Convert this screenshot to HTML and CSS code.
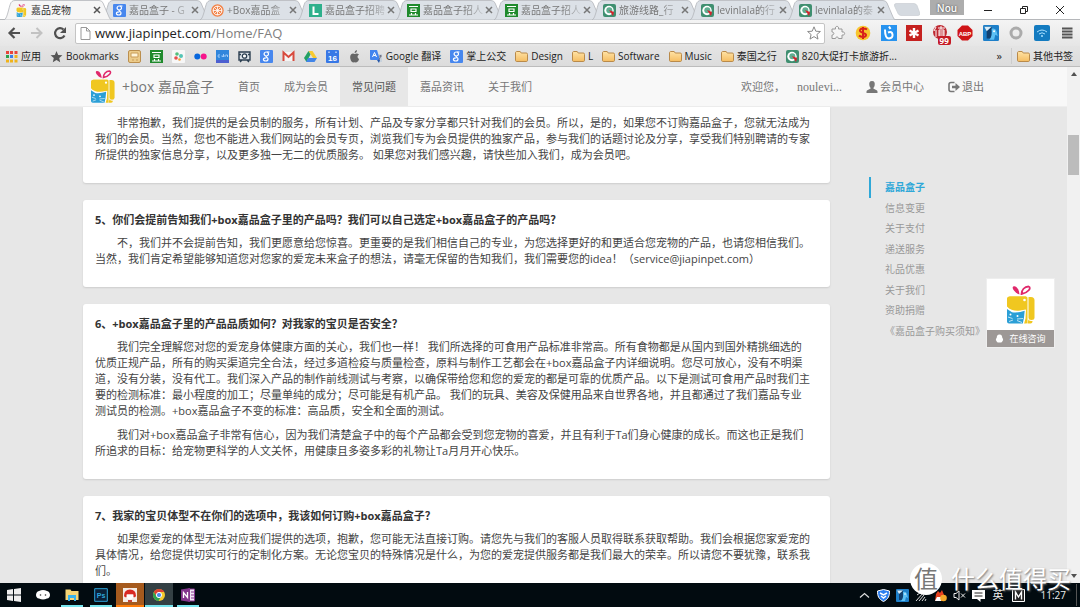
FILE: index.html
```html
<!DOCTYPE html>
<html lang="zh-CN">
<head>
<meta charset="utf-8">
<title>嘉品宠物</title>
<link rel="stylesheet" href="styles.css">
</head>
<body>
<svg class="defs" aria-hidden="true">
  <defs>
    <linearGradient id="folderFill" x1="0" y1="0" x2="0" y2="1"><stop offset="0" stop-color="#ffe3a6"/><stop offset="1" stop-color="#f5bd62"/></linearGradient>
    <symbol id="logo" viewBox="0 0 28 38">
      <path d="M12.500 9C8 7.500 4.500 3 6 1.300 8.500-.5 12 3 12.500 9z" fill="#e0296b"/>
      <path d="M14.500 8.500c0-4 3-7.500 7-7.500 3.500 1-.5 6.500-7 7.500z" fill="none" stroke="#e0296b" stroke-width="1.800"/>
      <path d="M3 11h16q1.500 0 1.500 1.500V37q0 1-1.500 1H2q-2 0-2-2v-7q8 2 18-5c-6 2-14 2-18-3V14q0-3 3-3z" fill="#f0c720"/>
      <path d="M0 21v-7q0-3 3-3h16v12q-2 1-5 .8Q5 24.500 0 20z" fill="#f0c720"/>
      <path d="M-.5 22l5.500 3.500q6 1 14-1.500l-.5 9L17 38.500H-.5z" fill="#fff"/>
      <path d="M0 23.500l5 3.200q6 .8 12.700-1.500L17 32l-1.200 6H2q-2 0-2-2z" fill="#2b9fd6"/>
      <path d="M21.500 11.500H24q3.500 0 3.500 3.500v17q0 2.500-3 2.500t-3-2.500z" fill="#f0c720"/>
      <path d="M21.500 34q1 2 4 1.500V36q0 2-2 2h-3z" fill="#f0c720"/>
      <circle cx="17.500" cy="14.500" r="1.300" fill="#fff"/><circle cx="3.500" cy="29" r="1" fill="#fff"/><circle cx="10.500" cy="30.500" r="1" fill="#fff"/>
      <path d="M1 31.500l4.500 1.500M2 36l4-1.500M10 33.500l6-.5M10 35l5 2" stroke="#fff" stroke-width=".7"/>
    </symbol>
    <symbol id="folder" viewBox="0 0 13 13"><path d="M.5 3c0-1 .4-1.500 1.200-1.500h3.500l1 1.500h5c.8 0 1.300.4 1.300 1.300v6c0 .8-.4 1.200-1.200 1.200H1.700C.9 11.500.5 11 .5 10.300z" fill="url(#folderFill)" stroke="#b98a4a"/></symbol>
    <symbol id="goog" viewBox="0 0 13 13"><rect width="13" height="13" rx="1" fill="#4787ee"/><ellipse cx="6.300" cy="4" rx="2.200" ry="2" fill="none" stroke="#fff" stroke-width="1.200"/><path d="M7 2h2.500M6 6c0 1.300 2 1.500 2 3s-1 2-2.200 2-2.400-.6-2.400-1.700S5 7.700 6.500 7.800" fill="none" stroke="#fff" stroke-width="1.200"/></symbol>
    <symbol id="dou" viewBox="0 0 13 13"><rect width="13" height="13" fill="#1f8a2c"/><path d="M2 2.500h9M4 5h5v2.500H4zM4.500 9v1.500M8.500 9v1.500M2 11h9" fill="none" stroke="#fff" stroke-width="1.200"/></symbol>
    <symbol id="qy" viewBox="0 0 13 13"><rect width="13" height="13" rx="2" fill="#3f8f70"/><circle cx="6" cy="6.500" r="4.700" fill="#fff"/><circle cx="6.300" cy="6.300" r="3" fill="#5fae90"/><path d="M6 6l5 2-1 4z" fill="#d6222c"/></symbol>
    <symbol id="tabshape" viewBox="0 0 108 20" preserveAspectRatio="none"><path d="M0 20C4 19 5 3 8 1.500Q9 .5 11 .5H95Q98 .5 99 3L105 17Q106 20 108 20z" fill="currentColor" stroke="#b2b5ba" stroke-width=".8"/></symbol>
    <symbol id="bird" viewBox="0 0 13 13"><rect width="13" height="13" rx="1" fill="#1d7fc9"/><path d="M1 1.500h6V11H3V5z" fill="#12406f"/><path d="M1 1.500h6L3 5z" fill="#d8eefb"/><path d="M7 3q3-1 4 2l1 4-2-1-1 4H5q3-3 2-9z" fill="#5cc0f5"/><circle cx="9" cy="5" r=".8" fill="#fff"/></symbol>
  </defs>
</svg>

<header class="browser">
  <div class="tabstrip">
    <nav class="tabs" aria-label="标签页">
      <div class="tab active"><svg class="shape"><use href="#tabshape"/></svg><svg class="fav"><use href="#logo"/></svg><span>嘉品宠物</span><button aria-label="关闭"><svg viewBox="0 0 8 8"><path d="M1 1l6 6M7 1L1 7" stroke="#555" stroke-width="1.500"/></svg></button></div>
      <div class="tab"><svg class="shape"><use href="#tabshape"/></svg><svg class="fav"><use href="#goog"/></svg><span>嘉品盒子 - G</span><button aria-label="关闭"><svg viewBox="0 0 8 8"><path d="M1 1l6 6M7 1L1 7" stroke="#777" stroke-width="1.500"/></svg></button></div>
      <div class="tab"><svg class="shape"><use href="#tabshape"/></svg><svg class="fav" viewBox="0 0 13 13"><circle cx="6.500" cy="6.500" r="6.200" fill="#f28247"/><circle cx="6.500" cy="6.500" r="4.400" fill="none" stroke="#fff"/><path d="M6.500 2v9M2 6.500h9M3.500 3.500l6 6M9.500 3.500l-6 6" stroke="#fff" stroke-width=".8"/></svg><span>+Box嘉品盒</span><button aria-label="关闭"><svg viewBox="0 0 8 8"><path d="M1 1l6 6M7 1L1 7" stroke="#777" stroke-width="1.500"/></svg></button></div>
      <div class="tab"><svg class="shape"><use href="#tabshape"/></svg><svg class="fav" viewBox="0 0 13 13"><rect width="13" height="13" fill="#2eb08c"/><path d="M4.500 2.500v7.500h5" fill="none" stroke="#fff" stroke-width="2"/></svg><span>嘉品盒子招聘</span><button aria-label="关闭"><svg viewBox="0 0 8 8"><path d="M1 1l6 6M7 1L1 7" stroke="#777" stroke-width="1.500"/></svg></button></div>
      <div class="tab"><svg class="shape"><use href="#tabshape"/></svg><svg class="fav"><use href="#dou"/></svg><span>嘉品盒子招人</span><button aria-label="关闭"><svg viewBox="0 0 8 8"><path d="M1 1l6 6M7 1L1 7" stroke="#777" stroke-width="1.500"/></svg></button></div>
      <div class="tab"><svg class="shape"><use href="#tabshape"/></svg><svg class="fav"><use href="#dou"/></svg><span>嘉品盒子招人</span><button aria-label="关闭"><svg viewBox="0 0 8 8"><path d="M1 1l6 6M7 1L1 7" stroke="#777" stroke-width="1.500"/></svg></button></div>
      <div class="tab"><svg class="shape"><use href="#tabshape"/></svg><svg class="fav"><use href="#qy"/></svg><span>旅游线路_行</span><button aria-label="关闭"><svg viewBox="0 0 8 8"><path d="M1 1l6 6M7 1L1 7" stroke="#777" stroke-width="1.500"/></svg></button></div>
      <div class="tab"><svg class="shape"><use href="#tabshape"/></svg><svg class="fav"><use href="#qy"/></svg><span>levinlala的行</span><button aria-label="关闭"><svg viewBox="0 0 8 8"><path d="M1 1l6 6M7 1L1 7" stroke="#777" stroke-width="1.500"/></svg></button></div>
      <div class="tab"><svg class="shape"><use href="#tabshape"/></svg><svg class="fav"><use href="#qy"/></svg><span>levinlala的泰</span><button aria-label="关闭"><svg viewBox="0 0 8 8"><path d="M1 1l6 6M7 1L1 7" stroke="#777" stroke-width="1.500"/></svg></button></div>
    </nav>
    <button class="newtab" aria-label="新标签页"><svg viewBox="0 0 26 13"><path d="M2 .5h18q2 0 3 2l3 8q0 2-2 2H7q-2 0-3-2L.5 3Q0 .5 2 .5z" fill="#d5dae0" stroke="#c4c9ce" stroke-width=".6"/></svg></button>
    <div class="wincontrols">
      <button class="user">Nou</button>
      <button aria-label="最小化"><svg viewBox="0 0 10 10"><path d="M1 5.500h8" stroke="#222"/></svg></button>
      <button aria-label="还原"><svg viewBox="0 0 10 10"><path d="M1.500 3.500h5v5h-5zM3.500 3.500v-2h5v5h-2" fill="none" stroke="#222"/></svg></button>
      <button aria-label="关闭窗口"><svg viewBox="0 0 10 10"><path d="M1 1l8 8M9 1L1 9" stroke="#222"/></svg></button>
    </div>
  </div>

  <div class="toolbar">
    <button aria-label="后退"><svg viewBox="0 0 14 14"><path d="M13 7H3M7.500 2L2.500 7l5 5" fill="none" stroke="#505050" stroke-width="2.200"/></svg></button>
    <button aria-label="前进"><svg viewBox="0 0 14 14"><path d="M1 7h10M6.500 2l5 5-5 5" fill="none" stroke="#c2c2c2" stroke-width="2"/></svg></button>
    <button aria-label="刷新"><svg viewBox="0 0 14 14"><path d="M11.500 9.500A5 5 0 1 1 10.500 3.500" fill="none" stroke="#505050" stroke-width="2.200"/><path d="M13 1v6H7z" fill="#505050"/></svg></button>
    <div class="address" role="textbox" aria-label="地址">
      <svg class="doc" viewBox="0 0 11 13"><path d="M1 .5h5.500L10 4v8.500H1zM6.500.5V4H10" fill="#fff" stroke="#999"/></svg>
      <span class="url">www.jiapinpet.com<i>/Home/FAQ</i></span>
      <button aria-label="加入书签"><svg viewBox="0 0 14 14"><path d="M7 .8l1.800 4.400 4.600.3-3.500 3 1.100 4.600L7 10.600l-4 2.500 1.100-4.600-3.500-3 4.600-.3z" fill="#fff" stroke="#888"/></svg></button>
    </div>
    <div class="extensions">
      <button aria-label="扩展"><svg viewBox="0 0 16 16"><path d="M2 4h3.500C4.500.5 9.500.5 8.500 4H12v3c3.500-1 3.500 4 0 3v3.500H8.500c0-2-3-2-3 0H2V10c2.500 0 2.500-3 0-3z" fill="#f5f5f5" stroke="#999"/></svg></button>
      <button aria-label="购物"><svg viewBox="0 0 16 16"><circle cx="8" cy="8" r="7.300" fill="#f7c52e"/><path d="M12 4.500C10 3 4.500 3 5 6c.5 2 6 1.500 6 4 0 2.500-5 2.500-7 .5M8 2v12" fill="none" stroke="#d7201b" stroke-width="2"/></svg></button>
      <button aria-label="六"><svg viewBox="0 0 16 16"><path d="M0 0h16v16H0z" fill="#2793ef"/><path d="M8 1.500L9.500 4M4 4.500q0 9 4 9 4-.5 3.500-4T7 7.500" fill="none" stroke="#fff" stroke-width="2"/></svg></button>
      <button aria-label="密码"><svg viewBox="0 0 16 16"><path d="M0 0h16v16H0z" fill="#c5211f"/><path d="M8 3v10M3.500 5.500l9 5M12.500 5.500l-9 5" stroke="#fff" stroke-width="2.400"/></svg></button>
      <button class="badged" aria-label="值"><svg viewBox="0 0 16 16"><circle cx="8" cy="7" r="7" fill="#be2931"/><path d="M4 2L2 6M4 5v7M6 3h7M9 1v3M7 5h5v6H7zM7 7h5M7 9h5" fill="none" stroke="#fff"/></svg><b>99</b></button>
      <button aria-label="ABP"><svg viewBox="0 0 16 16"><path d="M5 .5h6L15.500 5v6L11 15.500H5L.5 11V5z" fill="#cf1417"/><text x="8" y="10.500" text-anchor="middle" class="abp">ABP</text></svg></button>
      <button aria-label="鸟"><svg><use href="#bird"/></svg></button>
      <button aria-label="圆环"><svg viewBox="0 0 16 16"><circle cx="8" cy="8" r="5" fill="none" stroke="#ababab" stroke-width="3"/></svg></button>
      <button aria-label="无线"><svg viewBox="0 0 16 16"><rect width="16" height="16" rx="2" fill="#137bc0"/><path d="M3 7q5-4 10 0M5 9q3-2.500 6 0" fill="none" stroke="#a9e0ff"/><circle cx="8" cy="11" r="1" fill="#a9e0ff"/></svg></button>
      <button aria-label="菜单"><svg viewBox="0 0 16 16"><path d="M3 3.500h10.500M3 6.500h10.500M3 9.500h10.500M3 12.500h10.500" stroke="#555" stroke-width="1.800"/></svg></button>
    </div>
  </div>

  <nav class="bookmarks" aria-label="书签">
    <a href="#"><svg viewBox="0 0 13 13"><path d="M1 1h3v3H1z" fill="#e8443a"/><path d="M5 1h3v3H5z" fill="#e8443a"/><path d="M9.500 1h3v3h-3z" fill="#e8443a"/><path d="M1 5h3v3H1z" fill="#2ba24c"/><path d="M5 5h3v3H5z" fill="#3b7de9"/><path d="M9.500 5h3v3h-3zM1 9.500h3v3H1zM5 9.500h3v3H5zM9.500 9.500h3v3h-3z" fill="#f0b31a"/></svg>应用</a>
    <a href="#"><svg viewBox="0 0 14 14"><path d="M7 1l1.800 4.400 4.600.3-3.500 3 1.100 4.600L7 10.800l-4 2.500 1.100-4.600-3.500-3 4.600-.3z" fill="#555"/></svg>Bookmarks</a>
    <a href="#" aria-label="存档"><svg viewBox="0 0 13 13"><rect x=".5" y=".5" width="12" height="12" rx="1.500" fill="#eccb8a" stroke="#bb8f4e"/><path d="M3 3h7v4H3zM4 10h2M8 10h2" fill="#fff4d8" stroke="#c99c58"/></svg></a>
    <a href="#" aria-label="豆瓣"><svg><use href="#dou"/></svg></a>
    <a href="#" aria-label="花瓣"><svg viewBox="0 0 13 13"><rect width="13" height="13" rx="1" fill="#f7f7f7"/><circle cx="5" cy="4" r="1.800" fill="#53be7c"/><circle cx="9" cy="6" r="2" fill="#54c4b5"/><circle cx="4" cy="8" r="1.800" fill="#e94c4c"/><circle cx="7.500" cy="9.500" r="1.300" fill="#f29b38"/></svg></a>
    <a href="#" aria-label="Flickr"><svg viewBox="0 0 13 13"><circle cx="3.300" cy="6.500" r="3" fill="#0867dd"/><circle cx="9.700" cy="6.500" r="3" fill="#f7148b"/></svg></a>
    <a href="#" aria-label="Cdn"><svg viewBox="0 0 13 13"><path d="M0 0h13v13H0z" fill="#2f86dc"/><path d="M0 10h13v3H0z" fill="#4c5fd0"/><path d="M4 5q-2-1-2 1t2 1M5.500 6q1-1 1 1M7.500 4v3M9 5v2M9.500 5h2v2" fill="none" stroke="#b9dcff" stroke-width=".8"/></svg></a>
    <a href="#" aria-label="相机"><svg viewBox="0 0 13 13"><path d="M1 2h11v8H1zM2 12l2-2M11 12l-2-2M1 4.500h2M10 4.500h2" fill="#dce3e9" stroke="#2b3e50" stroke-width="1.400"/><circle cx="6.500" cy="6" r="2.200" fill="#fff" stroke="#2b3e50" stroke-width="1.300"/></svg></a>
    <a href="#" aria-label="Google"><svg><use href="#goog"/></svg></a>
    <a href="#" aria-label="Gmail"><svg viewBox="0 0 13 13"><path d="M1 2h11v9H1z" fill="#f5f5f5"/><path d="M1.500 11V2.500l5 4.500 5-4.500V11" fill="none" stroke="#d84a3d" stroke-width="2"/></svg></a>
    <a href="#" aria-label="云端硬盘"><svg viewBox="0 0 13 13"><path d="M4.500 1h4L13 8H9z" fill="#f8ca30"/><path d="M4.500 1l2 3.500L2.500 12 0 8z" fill="#24a163"/><path d="M4 8h9l-2.500 4H2z" fill="#4285e8"/></svg></a>
    <a href="#" aria-label="日历"><svg viewBox="0 0 13 13"><rect width="13" height="13" rx="1" fill="#3878e6"/><path d="M3 1.500v1.500M10 1.500v1.500" stroke="#fff"/><text x="6.500" y="10.500" text-anchor="middle" class="cal">16</text></svg></a>
    <a href="#" aria-label="Apple"><svg viewBox="0 0 13 13"><path d="M9 0Q6.500.5 6.500 3 9 2.800 9 0zM11 4.500Q9 3 6.800 4 4.500 3 3 4.500c-2 2.500 0 7.500 2 8q1.500-.7 3 0c1.500 0 3-2.500 3-3.500-2-1-2-3.500 0-4.500z" fill="#666"/></svg></a>
    <a href="#"><svg viewBox="0 0 13 13"><path d="M6 4h6v8H8z" fill="#c8d2dc"/><path d="M0 0h7l3 10H1Q0 10 0 9z" fill="#4384ee"/><path d="M2.500 7L4.500 2.500 6.500 7M3.300 5.500h2.500" fill="none" stroke="#fff"/><path d="M7 10l2 3 1-3z" fill="#2456a8"/><path d="M9 6h3M10.500 5v1q0 2-2 4" stroke="#667" fill="none" stroke-width=".8"/></svg>Google 翻译</a>
    <a href="#"><svg><use href="#goog"/></svg>掌上公交</a>
    <a href="#"><svg><use href="#folder"/></svg>Design</a>
    <a href="#"><svg><use href="#folder"/></svg>L</a>
    <a href="#"><svg><use href="#folder"/></svg>Software</a>
    <a href="#"><svg><use href="#folder"/></svg>Music</a>
    <a href="#"><svg><use href="#folder"/></svg>泰国之行</a>
    <a href="#"><svg><use href="#qy"/></svg>820大促打卡旅游折...</a>
    <button class="more" aria-label="更多书签">»</button>
    <a class="other" href="#"><svg><use href="#folder"/></svg>其他书签</a>
  </nav>
</header>

<div class="viewport">
  <div class="page">
    <header class="sitebar">
      <a class="brand" href="#"><svg><use href="#logo"/></svg>+box 嘉品盒子</a>
      <nav class="sitenav">
        <a href="#">首页</a><a href="#">成为会员</a><a href="#" class="current">常见问题</a><a href="#">嘉品资讯</a><a href="#">关于我们</a>
      </nav>
      <div class="account">
        <span class="greet">欢迎您，</span>
        <a class="name" href="#">noulevi...</a>
        <a href="#"><svg viewBox="0 0 12 12"><path d="M6 0C3.500 0 3 2 3.300 4c.2 1.500.7 2 1.200 2.700v1C3 8.500.5 9 .5 10.500V12h11v-1.500C11.500 9 9 8.500 7.500 7.700v-1C8 6 8.500 5.500 8.700 4 9 2 8.500 0 6 0z" fill="#777"/></svg>会员中心</a>
        <a href="#"><svg viewBox="0 0 12 12"><path d="M6.500 1.500H3q-2 0-2 2v5q0 2 2 2h3.500" fill="none" stroke="#777" stroke-width="1.600"/><path d="M4 4.700h3.500V2L12 6l-4.500 4V7.300H4z" fill="#777"/></svg>退出</a>
      </div>
    </header>

    <main class="content">
      <div class="faq">
        <article class="card cut">
          <p>非常抱歉，我们提供的是会员制的服务，所有计划、产品及专家分享都只针对我们的会员。所以，是的，如果您不订购嘉品盒子，您就无法成为<br>我们的会员。当然，您也不能进入我们网站的会员专页，浏览我们专为会员提供的独家产品，参与我们的话题讨论及分享，享受我们特别聘请的专家<br>所提供的独家信息分享，以及更多独一无二的优质服务。 如果您对我们感兴趣，请快些加入我们，成为会员吧。</p>
        </article>
        <article class="card">
          <h2>5、你们会提前告知我们+box嘉品盒子里的产品吗？我们可以自己选定+box嘉品盒子的产品吗？</h2>
          <p>不，我们并不会提前告知，我们更愿意给您惊喜。更重要的是我们相信自己的专业，为您选择更好的和更适合您宠物的产品，也请您相信我们。<br>当然，我们肯定希望能够知道您对您家的爱宠未来盒子的想法，请毫无保留的告知我们，我们需要您的idea！（service@jiapinpet.com）</p>
        </article>
        <article class="card">
          <h2>6、+box嘉品盒子里的产品品质如何？对我家的宝贝是否安全？</h2>
          <p>我们完全理解您对您的爱宠身体健康方面的关心，我们也一样！ 我们所选择的可食用产品标准非常高。所有食物都是从国内到国外精挑细选的<br>优质正规产品，所有的购买渠道完全合法，经过多道检疫与质量检查，原料与制作工艺都会在+box嘉品盒子内详细说明。您尽可放心，没有不明渠<br>道，没有分装，没有代工。我们深入产品的制作前线测试与考察，以确保带给您和您的爱宠的都是可靠的优质产品。以下是测试可食用产品时我们主<br>要的检测标准：最小程度的加工；尽量单纯的成分；尽可能是有机产品。 我们的玩具、美容及保健用品来自世界各地，并且都通过了我们嘉品专业<br>测试员的检测。+box嘉品盒子不变的标准：高品质，安全和全面的测试。</p>
          <p>我们对+box嘉品盒子非常有信心，因为我们清楚盒子中的每个产品都会受到您宠物的喜爱，并且有利于Ta们身心健康的成长。而这也正是我们<br>所追求的目标：给宠物更科学的人文关怀，用健康且多姿多彩的礼物让Ta月月开心快乐。</p>
        </article>
        <article class="card">
          <h2>7、我家的宝贝体型不在你们的选项中，我该如何订购+box嘉品盒子？</h2>
          <p>如果您爱宠的体型无法对应我们提供的选项，抱歉，您可能无法直接订购。请您先与我们的客服人员取得联系获取帮助。我们会根据您家爱宠的<br>具体情况，给您提供切实可行的定制化方案。无论您宝贝的特殊情况是什么，为您的爱宠提供服务都是我们最大的荣幸。所以请您不要犹豫，联系我<br>们。</p>
        </article>
      </div>
      <aside class="side">
        <ul>
          <li class="on"><a href="#">嘉品盒子</a></li><li><a href="#">信息变更</a></li><li><a href="#">关于支付</a></li><li><a href="#">递送服务</a></li><li><a href="#">礼品优惠</a></li><li><a href="#">关于我们</a></li><li><a href="#">资助捐赠</a></li><li><a href="#">《嘉品盒子购买须知》</a></li>
        </ul>
      </aside>
    </main>

    <button class="chat">
      <span class="chatlogo"><svg><use href="#logo"/></svg></span>
      <span class="chatbar"><svg viewBox="0 0 10 10"><path d="M5 .5C2.500.5 2 2.500 2 4 1 5.500.5 7 1.500 7.500 2 9 2.500 9.500 5 9.500S8 9 8.500 7.500C9.500 7 9 5.500 8 4 8 2.500 7.500.5 5 .5z" fill="#fff"/></svg>在线咨询</span>
    </button>
  </div>
  <div class="scrollbar">
    <svg viewBox="0 0 6 4"><path d="M0 4l3-4 3 4z" fill="#505050"/></svg>
    <div class="track"><div class="thumb"></div></div>
    <svg viewBox="0 0 6 4"><path d="M0 0l3 4 3-4z" fill="#505050"/></svg>
  </div>
</div>

<footer class="taskbar">
  <div class="apps">
    <button aria-label="开始"><svg viewBox="0 0 14 14"><path d="M0 2l6-1v5.500H0zM7 1l7-1v6.500H7zM0 7.500h6V13l-6-1zM7 7.500h7V14l-7-1z" fill="#eee"/></svg></button>
    <button aria-label="云"><svg viewBox="0 0 14 14"><path d="M3 3q4-2 8 0c4 1 4 7 0 7.500q-4 2-8 0C-1 10-1 4 3 3z" fill="#fff"/><circle cx="4.500" cy="7" r=".8" fill="#333"/><circle cx="9.500" cy="7" r=".8" fill="#333"/></svg></button>
    <button class="open" aria-label="资源管理器"><svg viewBox="0 0 14 14"><path d="M.5 1.500h5l1 1.500h7v9H.5z" fill="#f6d575"/><path d="M3 7h8v6H9v-3H5v3H3z" fill="#38b3ee"/></svg></button>
    <button class="open" aria-label="Photoshop"><svg viewBox="0 0 14 14"><path d="M.7.7h12.600v12.600H.7z" fill="#0a2038" stroke="#2da6dc"/><text x="7" y="9.800" text-anchor="middle" class="ps">Ps</text></svg></button>
    <button class="open orange" aria-label="聊天"><svg viewBox="0 0 14 14"><path d="M0 0h14v14H0z" fill="#f4ece6"/><path d="M1 8q0-6.500 6-6.500T13 8q-1 2-2.500 1V6.500h-7V9Q2 10 1 8z" fill="#d92a23"/><path d="M4 6.500h6V10q-3 3-6 0z" fill="#fff"/><path d="M5 12h4v2H5z" fill="#c8443a"/></svg></button>
    <button class="open grey" aria-label="Chrome"><svg viewBox="0 0 14 14"><circle cx="7" cy="7" r="6" fill="#f6c92d"/><path d="M1.800 4A6 6 0 0 1 12.300 4H7L4.500 8.500z" fill="#de4235"/><path d="M1.800 4L4.800 9 8.500 9.500 6.500 13A6 6 0 0 1 1.800 4z" fill="#2ea350"/><circle cx="7" cy="7" r="2.600" fill="#4a8bf0" stroke="#fff"/></svg></button>
    <button class="open" aria-label="OneNote"><svg viewBox="0 0 14 14"><path d="M7 1h6.500v12H7z" fill="#f3e6f5" stroke="#83358c"/><path d="M10 4h3M10 7h3M10 10h3" stroke="#83358c"/><path d="M0 1.500L9 0v14l-9-1.500z" fill="#83358c"/><path d="M2.500 10V4.500l4 5V4" fill="none" stroke="#fff" stroke-width="1.300"/></svg></button>
  </div>
  <div class="tray">
    <svg viewBox="0 0 13 13"><path d="M2 8.500l4.500-4 4.500 4" fill="none" stroke="#ddd" stroke-width="1.200"/></svg>
    <svg viewBox="0 0 13 13"><path d="M6.500.5l6 1.500c0 5-1 8-6 10.500C1.500 10 .5 7 .5 2z" fill="#2c7ff0" stroke="#fff"/><path d="M3 4l3.500 2L10 4M4 7l2.500 2L9 7" fill="none" stroke="#fff" stroke-width="1.500"/></svg>
    <svg><use href="#bird"/></svg>
    <svg viewBox="0 0 13 13"><path d="M1 12L9 3M4 12l5-6M7 12l3-4M10 12l1-2M2 6q4-4 9-4" fill="none" stroke="#ddd"/></svg>
    <svg viewBox="0 0 13 13"><path d="M2 5l2-3 2 2 2-3 2 5v6H1z" fill="#e64220"/><path d="M3 8h4v4H1z" fill="#fff"/><circle cx="9.500" cy="9" r="3.300" fill="#f3a92a"/></svg>
    <svg viewBox="0 0 13 13"><path d="M1 4.500h2L6 2v9L3 8.500H1zM8 4.500l4 4M12 4.500l-4 4" fill="none" stroke="#eee"/></svg>
    <svg viewBox="0 0 13 13"><path d="M0 1h13v9H8.500v3L5 10H0z" fill="#fff"/><path d="M2.500 4h8M2.500 7h8" stroke="#222"/></svg>
    <span class="ime">英</span>
    <svg viewBox="0 0 13 13"><path d="M.5.5h12v12H.5z" fill="#222" stroke="#fff"/><path d="M3.500 10.500V3l3 5 3-5v7.500" fill="none" stroke="#fff" stroke-width="1.400"/></svg>
    <time>11:27</time>
  </div>
</footer>
<div class="watermark"><b>值</b><span>什么值得买</span></div>
</body>
</html>
```
FILE: styles.css
```css
* { box-sizing: border-box; }
body {
  margin: 0;
  height: 100vh;
  display: flex;
  flex-direction: column;
  overflow: hidden;
  position: relative;
  font: 11px/16px "Open Sans", "Noto Sans CJK SC", sans-serif;
  background: #e7e7e7;
  color: #444;
}
button { border: 0; padding: 0; margin: 0; background: none; font: inherit; color: inherit; display: flex; align-items: center; justify-content: center; }
a { color: inherit; text-decoration: none; }
svg { display: block; flex: none; }
.defs { position: absolute; width: 0; height: 0; }

/* browser window */
.browser { flex: none; background: #fff; }
.tabstrip { display: flex; height: 20px; padding: 0 2px 0 4px; border-bottom: 1px solid #b5b7ba; }
.tabs { display: flex; }
.tab { position: relative; width: 98px; height: 20px; display: flex; align-items: center; padding-left: 11px; font-size: 10px; color: #777; }
.tab .shape { position: absolute; left: 0; top: 0; width: 108px; height: 20px; color: #dce1e7; }
.tab.active { z-index: 2; color: #333; }
.tab.active .shape { color: #f6f6f6; }
.tab .fav { position: relative; width: 13px; height: 13px; }
.tab span { position: relative; width: 62px; margin-left: 3px; white-space: nowrap; mask-image: linear-gradient(90deg, #000 65%, #0004 96%); }
.tab.active span { mask-image: none; }
.tab button { position: relative; width: 8px; }
.tab button svg { width: 8px; height: 8px; }
.newtab { margin-left: 8px; }
.newtab svg { width: 26px; height: 13px; }
.wincontrols { margin-left: auto; display: flex; align-items: center; }
.wincontrols button { width: 36px; }
.wincontrols svg { width: 10px; height: 10px; }
.wincontrols .user { width: 34px; height: 15px; margin-right: 6px; align-self: flex-start; background: #adadad; color: #fff; font-size: 10px; font-weight: 600; text-shadow: 0 0 2px #333; }

.toolbar { display: flex; align-items: center; height: 26px; padding: 0 5px 0 6px; background: linear-gradient(#f4f4f4, #e6e6e6); }
.toolbar > button { width: 16px; height: 16px; margin-right: 7px; }
.toolbar > button svg { width: 14px; height: 14px; }
.address { flex: 1; display: flex; align-items: center; height: 21px; padding: 0 3px 0 4px; border: 1px solid #c4c4c4; border-radius: 2px; background: #fff; }
.address .doc { width: 11px; height: 13px; }
.address .url { flex: 1; margin-left: 4px; font-size: 13px; line-height: 18px; color: #222; }
.url i { font-style: normal; color: #808080; }
.address button svg { width: 14px; height: 14px; }
.extensions { display: flex; justify-content: space-between; width: 245px; margin-left: 5px; }
.extensions svg { width: 16px; height: 16px; }
.badged { position: relative; }
.badged b { position: absolute; right: -3px; bottom: -4px; padding: 0 2px; border-radius: 2px; background: #c51a25; color: #fff; font-size: 8px; line-height: 9px; }
.abp { font: bold 6px "Liberation Sans", sans-serif; fill: #fff; }

.bookmarks { display: flex; align-items: center; gap: 9px; height: 21px; padding: 0 7px 0 5px; background: linear-gradient(#e4e4e4, #dcdcdc); border-bottom: 1px solid #bcbcbc; font-size: 10px; color: #222; white-space: nowrap; }
.bookmarks a { display: flex; align-items: center; gap: 3px; }
.bookmarks svg { width: 13px; height: 13px; }
.cal { font: bold 8px "Liberation Sans", sans-serif; fill: #fff; }
.more { margin-left: auto; font-size: 11px; }
.bookmarks .other { padding-left: 5px; border-left: 1px solid #ccc; }

/* web page */
.viewport { flex: 1; min-height: 0; display: flex; }
.page { position: relative; flex: 1; min-width: 0; overflow: hidden; }
.sitebar { display: flex; height: 40px; padding: 0 83px 0 91px; background: #f8f8f8; border-bottom: 1px solid #eee; color: #777; }
.brand { display: flex; align-items: center; gap: 7px; padding-right: 12px; font-size: 14px; }
.brand svg { width: 24px; height: 33px; }
.sitenav { display: flex; }
.sitenav a { display: flex; align-items: center; padding: 0 12px; }
.sitenav .current { background: #e7e7e7; color: #555; }
.account { margin-left: auto; display: flex; align-items: center; gap: 24px; }
.account a { display: flex; align-items: center; gap: 2px; }
.account svg { width: 12px; height: 12px; }
.account .greet, .account .name { font-family: "Liberation Serif", "Noto Sans CJK SC", serif; }
.account .name { font-size: 12px; }
.account .greet { margin-right: -12px; }

.content { display: flex; padding-left: 83px; }
.faq { width: 70%; min-width: 747px; display: flex; flex-direction: column; gap: 17px; }
.card { padding: 12px 0 20px 12px; border-radius: 3px; background: #fff; box-shadow: 0 1px 2px #ccc; white-space: nowrap; }
.card.cut { padding-top: 8px; border-radius: 0 0 3px 3px; }
.card h2 { margin: 0 0 7px; font-size: 11px; line-height: 16px; color: #333; }
.card p { margin: 0; text-indent: 22px; }
.card p + p { margin-top: 8px; }
.side { padding: 70px 0 0 39px; font-size: 10px; color: #999; }
.side ul { display: grid; grid-auto-rows: 1fr; height: 164px; margin: 0; padding: 0; list-style: none; white-space: nowrap; }
.side li { display: flex; align-items: center; padding-left: 14px; border-left: 2px solid transparent; }
.side .on { border-color: #2fa8d8; color: #2fa8d8; font-weight: bold; }

.chat { position: absolute; right: 12px; top: 211px; width: 69px; flex-direction: column; align-items: stretch; border: 1px solid #eee; background: #fff; }
.chatlogo { display: flex; justify-content: center; padding: 6px 0; }
.chatlogo svg { width: 28px; height: 39px; }
.chatbar { display: flex; align-items: center; justify-content: center; gap: 5px; height: 17px; background: #9d9896; color: #fff; font-size: 9px; }
.chatbar svg { width: 9px; height: 9px; }

.scrollbar { width: 13px; display: flex; flex-direction: column; align-items: center; padding: 5px 0; background: #f1f1f1; }
.scrollbar svg { width: 6px; height: 4px; }
.track { flex: 1; width: 11px; padding-top: 59px; }
.thumb { height: 40px; background: #bcbcbc; }

/* desktop */
.taskbar { flex: none; display: flex; justify-content: space-between; height: 24px; background: #020b10; color: #eee; }
.apps { display: flex; gap: 1px; }
.apps button { width: 28px; height: 24px; position: relative; }
.apps svg { width: 14px; height: 14px; }
.apps .open::after { content: ""; position: absolute; left: 3px; right: 3px; bottom: 0; height: 2px; background: #76e5ee; }
.apps .orange { background: #a55a1e; }
.apps .orange::after { left: 0; right: 0; background: #ff7d0a; }
.apps .grey { background: #344044; }
.apps .grey::after { left: 0; right: 0; }
.ps { font: bold 7px "Liberation Sans", sans-serif; fill: #2da6dc; }
.tray { display: flex; align-items: center; gap: 6px; padding-right: 3px; }
.tray svg { width: 13px; height: 13px; }
.ime { font-size: 11px; width: 15px; text-align: center; }
.tray time { margin-left: 10px; padding-right: 10px; border-right: 1px solid #555; font-size: 10px; line-height: 22px; }

.watermark { position: absolute; right: 9px; bottom: 12px; display: flex; align-items: center; gap: 9px; font-size: 24px; line-height: 32px; color: #fff; text-shadow: 1px 1px 2px #777; }
.watermark b { width: 32px; height: 32px; border-radius: 50%; background: #fff; color: #777; text-align: center; text-shadow: none; font-weight: normal; }
```
